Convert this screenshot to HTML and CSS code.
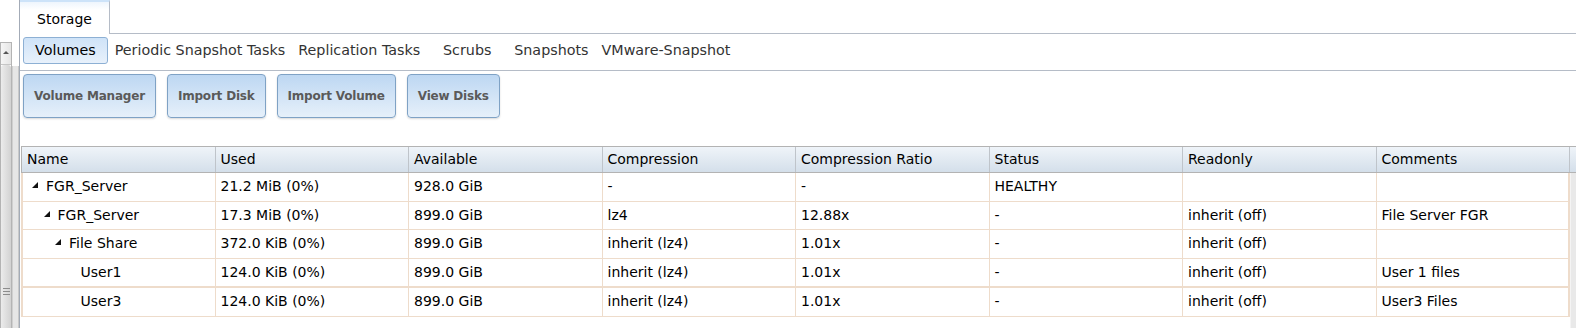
FILE: index.html
```html
<!DOCTYPE html>
<html lang="en">
<head>
  <meta charset="UTF-8">
  <title>Storage</title>
  <link rel="stylesheet" href="styles.css">
</head>
<body>

  <div class="page">
    <div class="rail">
      <div class="rail-scroll">
        <div class="rail-arrow"><span class="arrow-up"></span></div>
        <div class="rail-thumb"><span class="grip"></span></div>
      </div>
      <div class="rail-track"></div>
    </div>

    <div class="main">
      <div class="tabbar">
        <div class="tab active">Storage</div>
        <div class="tab-rest"></div>
      </div>

      <div class="subtabs">
        <div class="subtab active">Volumes</div>
        <div class="subtab">Periodic Snapshot Tasks</div>
        <div class="subtab">Replication Tasks</div>
        <div class="subtab wide">Scrubs</div>
        <div class="subtab">Snapshots</div>
        <div class="subtab">VMware-Snapshot</div>
      </div>

      <div class="toolbar">
        <button class="btn">Volume Manager</button>
        <button class="btn">Import Disk</button>
        <button class="btn">Import Volume</button>
        <button class="btn">View Disks</button>
      </div>

      <div class="grid">
        <div class="grid-head">
          <div class="head-cell">Name</div>
          <div class="head-cell">Used</div>
          <div class="head-cell">Available</div>
          <div class="head-cell">Compression</div>
          <div class="head-cell">Compression Ratio</div>
          <div class="head-cell">Status</div>
          <div class="head-cell">Readonly</div>
          <div class="head-cell">Comments</div>
          <div class="head-fill"></div>
        </div>

        <div class="grid-body">
          <div class="rows">
            <div class="row">
              <div class="cell name"><span class="toggle"><svg width="6" height="6" viewBox="0 0 6 6"><polygon points="6,0 6,6 0,6"/></svg></span>FGR_Server</div>
              <div class="cell">21.2 MiB (0%)</div>
              <div class="cell">928.0 GiB</div>
              <div class="cell">-</div>
              <div class="cell">-</div>
              <div class="cell">HEALTHY</div>
              <div class="cell"></div>
              <div class="cell"></div>
            </div>
            <div class="row">
              <div class="cell name lvl-1"><span class="toggle"><svg width="6" height="6" viewBox="0 0 6 6"><polygon points="6,0 6,6 0,6"/></svg></span>FGR_Server</div>
              <div class="cell">17.3 MiB (0%)</div>
              <div class="cell">899.0 GiB</div>
              <div class="cell">lz4</div>
              <div class="cell">12.88x</div>
              <div class="cell">-</div>
              <div class="cell">inherit (off)</div>
              <div class="cell">File Server FGR</div>
            </div>
            <div class="row">
              <div class="cell name lvl-2"><span class="toggle"><svg width="6" height="6" viewBox="0 0 6 6"><polygon points="6,0 6,6 0,6"/></svg></span>File Share</div>
              <div class="cell">372.0 KiB (0%)</div>
              <div class="cell">899.0 GiB</div>
              <div class="cell">inherit (lz4)</div>
              <div class="cell">1.01x</div>
              <div class="cell">-</div>
              <div class="cell">inherit (off)</div>
              <div class="cell"></div>
            </div>
            <div class="row">
              <div class="cell name lvl-3"><span class="toggle"></span>User1</div>
              <div class="cell">124.0 KiB (0%)</div>
              <div class="cell">899.0 GiB</div>
              <div class="cell">inherit (lz4)</div>
              <div class="cell">1.01x</div>
              <div class="cell">-</div>
              <div class="cell">inherit (off)</div>
              <div class="cell">User 1 files</div>
            </div>
            <div class="row focused">
              <div class="cell name lvl-3"><span class="toggle"></span>User3</div>
              <div class="cell">124.0 KiB (0%)</div>
              <div class="cell">899.0 GiB</div>
              <div class="cell">inherit (lz4)</div>
              <div class="cell">1.01x</div>
              <div class="cell">-</div>
              <div class="cell">inherit (off)</div>
              <div class="cell">User3 Files</div>
            </div>
          </div>
          <div class="vscroll"></div>
        </div>
      </div>
    </div>
  </div>

</body>
</html>
```

FILE: styles.css
```css
/* Global styles */
* {
  margin: 0;
  padding: 0;
  box-sizing: border-box;
}

body {
  font-family: 'DejaVu Sans', Verdana, sans-serif;
  font-size: 14px;
  color: #000;
  background: #fff;
  overflow: hidden;
}

.page {
  display: flex;
  height: 328px;
}

/* Left rail (outer scrollbar) */
.rail {
  width: 19px;
  flex: none;
  display: flex;
  padding-top: 42px;
}

.rail-scroll {
  width: 12px;
  display: flex;
  flex-direction: column;
  border: 1px solid #b4b4b4;
  border-bottom: none;
}

.rail-arrow {
  height: 22px;
  display: flex;
  justify-content: center;
  padding-top: 8px;
  background: linear-gradient(to right, #f6f6f6, #e4e4e4);
  border-bottom: 1px solid #c6c6c6;
}

.arrow-up {
  width: 0;
  height: 0;
  border-left: 3px solid transparent;
  border-right: 3px solid transparent;
  border-bottom: 3px solid #555;
}

.rail-thumb {
  flex: 1;
  display: flex;
  justify-content: center;
  align-items: flex-end;
  padding-bottom: 33px;
  background: linear-gradient(to right, #ececec, #d2d2d2);
  border-radius: 3px 3px 0 0;
}

.grip {
  width: 7px;
  height: 7px;
  background: repeating-linear-gradient(#8c8c8c 0 1px, transparent 1px 3px);
}

.rail-track {
  width: 7px;
  margin-top: 24px;
  background: #e6e6e6;
  border-left: 1px solid #cfcfcf;
  border-right: 1px solid #c9c9c9;
}

/* Main panel */
.main {
  flex: 1;
  border-left: 1px solid #a3abb7;
}

.tabbar {
  display: flex;
  height: 34px;
}

.tab {
  width: 90px;
  padding-top: 7px;
  line-height: 20px;
  text-align: center;
  border-top: 2px solid #cde3f9;
  border-right: 1px solid #b5bcc7;
  background: linear-gradient(#eef5fd, #fff 8px);
}

.tab-rest {
  flex: 1;
  border-bottom: 1px solid #b5bcc7;
}

.subtabs {
  display: flex;
  align-items: flex-start;
  height: 37px;
  padding: 3px 0 0 3px;
  border-bottom: 1px solid #b5bcc7;
  font-size: 14.3px;
}

.subtab {
  height: 27px;
  line-height: 25px;
  padding: 0 5px;
  border: 1px solid transparent;
  color: #333;
  white-space: nowrap;
}

.subtab + .subtab {
  margin-left: 1px;
}

.subtab.active {
  padding: 0 11px;
  color: #000;
  border-color: #8db0d4;
  border-radius: 3px;
  background: linear-gradient(#cfe3f8, #e8f1fb);
}

.subtab.wide {
  min-width: 80px;
  text-align: center;
}

/* Buttons */
.toolbar {
  display: flex;
  gap: 11px;
  height: 75px;
  padding: 3px 0 0 3px;
}

.btn {
  height: 44px;
  padding: 0 10px;
  font-family: 'DejaVu Sans', Verdana, sans-serif;
  font-size: 12px;
  font-weight: bold;
  letter-spacing: -0.2px;
  color: #5a5a5a;
  border: 1px solid #7fa2c5;
  border-radius: 4px;
  background: linear-gradient(#bdd7f2, #e6f0fa);
  box-shadow: 0 1px 2px rgba(0, 0, 0, 0.15);
  cursor: pointer;
}

/* Grid */
.grid {
  margin-left: 1px;
}

.grid-head {
  display: grid;
  grid-template-columns: repeat(8, 193.5px) 1fr;
  height: 27px;
  border-top: 1px solid #b3b3b3;
  border-bottom: 1px solid #b3b3b3;
  border-left: 1px solid #b3b3b3;
  background: linear-gradient(#eff4f9, #d4dfea);
}

.head-cell {
  padding: 0 5px;
  line-height: 25px;
  white-space: nowrap;
  border-right: 1px solid #bfc4ca;
}

.grid-body {
  display: flex;
  height: 155px;
}

.rows {
  width: 1549px;
}

.row {
  display: grid;
  grid-template-columns: 192.5px repeat(7, 193.5px);
  height: 28.6px;
  border-left: 2px solid #eedccb;
  border-bottom: 1px solid #eedccb;
}

.row.focused {
  height: 29.6px;
  border-top: 1px solid #eedccb;
}

.cell {
  padding: 0 5px;
  line-height: 27.6px;
  white-space: nowrap;
  overflow: hidden;
  border-right: 1px solid #eedccb;
}

.cell:last-child {
  border-right-width: 2px;
}

.cell.name {
  display: flex;
  align-items: center;
}

.toggle {
  display: inline-flex;
  align-items: center;
  width: 18px;
  height: 10px;
  padding-left: 4px;
  margin-top: -3px;
  flex: none;
}

.toggle svg {
  fill: #111;
}

.lvl-1 { padding-left: 16.5px; }
.lvl-2 { padding-left: 28px; }
.lvl-3 { padding-left: 39.5px; }

.vscroll {
  flex: 1;
  background: #e9e9e9;
  border-left: 1px solid #f4f4f4;
}
```
